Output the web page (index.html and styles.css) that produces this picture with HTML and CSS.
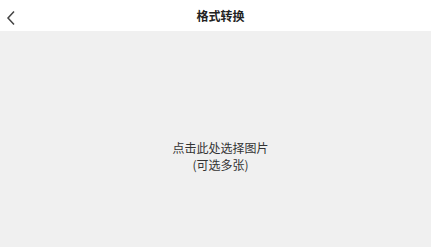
FILE: index.html
```html
<!DOCTYPE html>
<html lang="zh-CN">
  <head>
    <meta charset="UTF-8" />
    <meta name="viewport" content="width=device-width, initial-scale=1.0" />
    <title>格式转换</title>
    <link rel="stylesheet" href="styles.css">
  </head>
  <body>
    <div class="header">
      <span class="back">
        <svg width="10" height="16" viewBox="0 0 10 16">
          <path d="M8 1.5 L2 8 L8 14.5" fill="none" stroke="#444" stroke-width="1.5" />
        </svg>
      </span>
      <h1>格式转换</h1>
    </div>
    <div class="picker">
      <p>点击此处选择图片<br />(可选多张)</p>
    </div>
  </body>
</html>
```

FILE: styles.css
```css
body {
  margin: 0;
  font-family: "Noto Sans CJK SC", "Noto Sans", sans-serif;
  background: #f0f0f0;
  height: 247px;
  display: flex;
  flex-direction: column;
}
.header {
  height: 31px;
  background: white;
  display: flex;
  align-items: center;
  justify-content: center;
  padding-left: 10px;
  position: relative;
}
.back {
  position: absolute;
  left: 6px;
  top: 7px;
}
h1 {
  margin: 0;
  font-size: 12px;
  font-weight: bold;
  color: #222;
}
.picker {
  flex: 1;
  display: flex;
  align-items: center;
  justify-content: center;
  padding-left: 10px;
}
.picker p {
  margin: 0;
  text-align: center;
  font-size: 12px;
  line-height: 17px;
  color: #333;
  padding-top: 34px;
}
```
